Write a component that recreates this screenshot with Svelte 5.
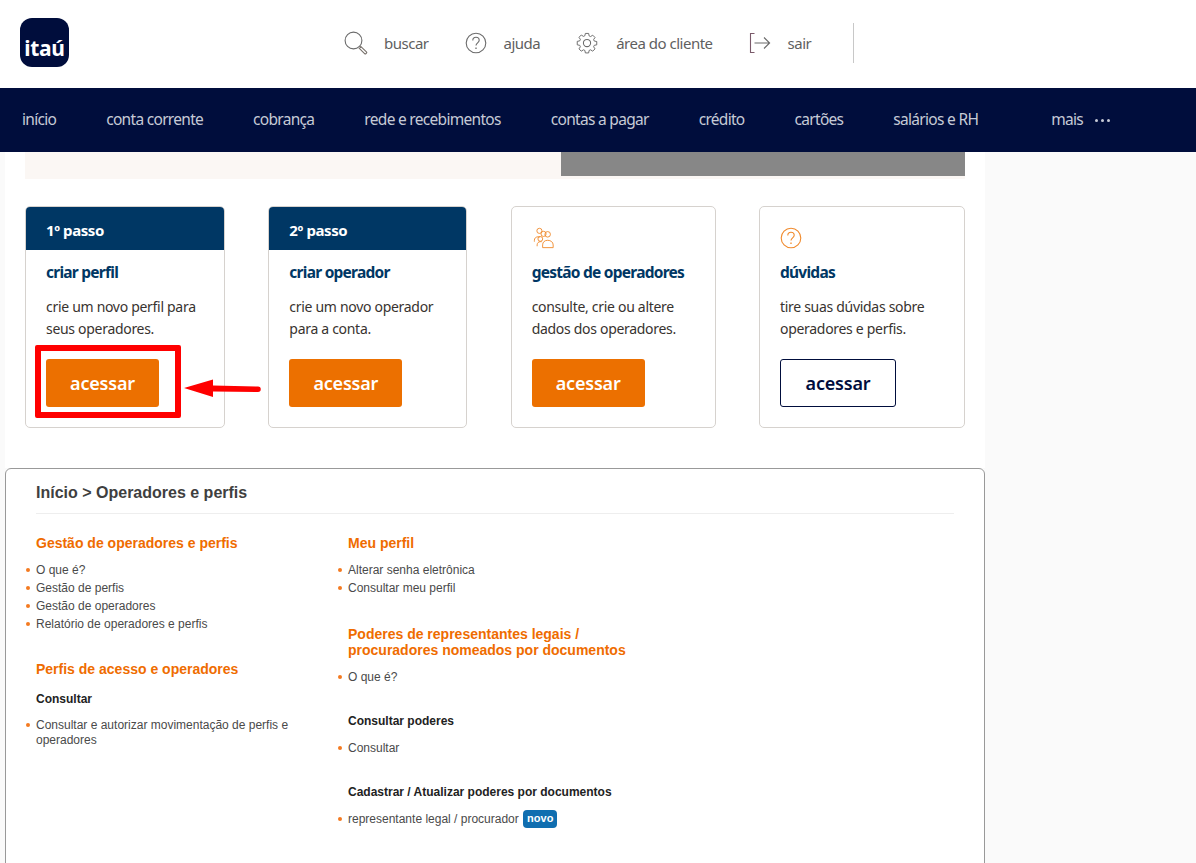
<script>
	const topLinks = [
		{ id: "search", label: "buscar" },
		{ id: "help", label: "ajuda" },
		{ id: "gear", label: "área do cliente" },
		{ id: "exit", label: "sair" },
	]

	const navItems = [
		"início",
		"conta corrente",
		"cobrança",
		"rede e recebimentos",
		"contas a pagar",
		"crédito",
		"cartões",
		"salários e RH",
	]

	const cards = [
		{ step: "1º passo", title: "criar perfil", text: ["crie um novo perfil para", "seus operadores."] },
		{ step: "2º passo", title: "criar operador", text: ["crie um novo operador", "para a conta."] },
		{ icon: "people", title: "gestão de operadores", text: ["consulte, crie ou altere", "dados dos operadores."] },
		{ icon: "help", title: "dúvidas", text: ["tire suas dúvidas sobre", "operadores e perfis."], outline: true },
	]
</script>

<div class="page">
	<header class="top">
		<div class="logo"><span>itaú</span></div>
		<div class="links">
			{#each topLinks as link}
				<a class="link {link.id}" href="#top">
					{#if link.id === "search"}
						<svg width="24" height="24" viewBox="0 0 24 24" fill="none" stroke="#6b6b6b" stroke-width="1.1">
							<circle cx="9.5" cy="9.5" r="8.4" />
							<path d="M15.6 15.6l1.4 1.2M16.4 15.2l6 5.6a1 1 0 0 1 0 1.4l-.4.4a1 1 0 0 1-1.4 0l-5.8-5.8" stroke="#77706a" />
						</svg>
					{:else if link.id === "help"}
						<svg width="22" height="22" viewBox="0 0 22 22" fill="none" stroke="#6b6b6b" stroke-width="1.1">
							<circle cx="11" cy="11" r="9.8" />
							<path d="M7.8 8.4c0-1.9 1.4-3.2 3.2-3.2s3.2 1.2 3.2 3c0 2.6-3.2 2.7-3.2 5.4" />
							<path d="M11 15.4v1.5" stroke-width="1.3" />
						</svg>
					{:else if link.id === "gear"}
						<svg width="22" height="22" viewBox="0 0 22 22" fill="none" stroke="#6b6b6b" stroke-width="1.05" stroke-linejoin="round">
							<circle cx="11" cy="11" r="3.6" />
							<path d="M9.2 1.2h3.6l.5 2.7 1.6.7 2.3-1.5 2.5 2.5-1.5 2.3.7 1.6 2.7.5v3.6l-2.7.5-.7 1.6 1.5 2.3-2.5 2.5-2.3-1.5-1.6.7-.5 2.7H9.2l-.5-2.7-1.6-.7-2.3 1.5-2.5-2.5 1.5-2.3-.7-1.6-2.7-.5V9.800l2.700-.5.7-1.600-1.500-2.300 2.500-2.500 2.300 1.500 1.600-.7z" transform="translate(11 11) scale(.92) translate(-11 -11.600)" />
						</svg>
					{:else}
						<svg width="22" height="22" viewBox="0 0 22 22" fill="none" stroke="#6b6b6b" stroke-width="1.1">
							<path d="M5.500 1.500H1.500v19h4" stroke="#7a5a6a" />
							<path d="M5.500 11h15M15 5.500l5.600 5.500-5.600 5.500" />
						</svg>
					{/if}
					<span>{link.label}</span>
				</a>
			{/each}
			<div class="sep"></div>
		</div>
	</header>

	<nav class="nav">
		{#each navItems as item}
			<a href="#top">{item}</a>
		{/each}
		<a class="more" href="#top">mais <i></i><i></i><i></i></a>
	</nav>

	<main class="content">
		<div class="hero"><div class="hero-img"></div></div>

		<div class="cards">
			{#each cards as card}
				<section class="card">
					{#if card.step}
						<div class="step">{card.step}</div>
					{:else if card.icon === "people"}
						<svg class="card-icon" width="24" height="24" viewBox="0 0 24 24" fill="none" stroke="#f08a2c" stroke-width="1">
							<circle cx="7" cy="4.200" r="2.800" />
							<circle cx="11.500" cy="7.500" r="2.800" />
							<circle cx="16" cy="8" r="3" />
							<path d="M1.500 16v-1.500c0-2.300 1.700-3.800 4-3.800h2.500" />
							<circle cx="8" cy="13" r="2.600" />
							<path d="M4.500 21v-1.500c0-2 1.500-3.500 3.500-3.500h1.500" />
							<path d="M10.500 22.500v-3c0-3 2.200-5 5.500-5s6 2 6 5v3z" />
						</svg>
					{:else}
						<svg class="card-icon" width="22" height="22" viewBox="0 0 22 22" fill="none" stroke="#f08a2c" stroke-width="1.100">
							<circle cx="11" cy="11" r="9.800" />
							<path d="M7.800 8.400c0-1.900 1.400-3.200 3.200-3.200s3.200 1.200 3.200 3c0 2.600-3.200 2.700-3.200 5.400" />
							<path d="M11 15.400v1.500" stroke-width="1.300" />
						</svg>
					{/if}
					<div class="body">
						<h3>{card.title}</h3>
						<p>{card.text[0]}<br />{card.text[1]}</p>
						<button class:outline={card.outline}>acessar</button>
					</div>
				</section>
			{/each}

			<!-- annotation drawn over the first card -->
			<div class="mark"></div>
			<svg class="arrow" width="80" height="24" viewBox="0 0 80 24">
				<path d="M1 12L30 3.500V9.500L75 10.500a2 2 0 0 1 0 5.500L30 15.500V21z" fill="#ff0000" />
			</svg>
		</div>
	</main>

	<section class="panel">
		<h2>Início &gt; Operadores e perfis</h2>
		<div class="cols">
			<div class="col">
				<h4>Gestão de operadores e perfis</h4>
				<ul>
					<li>O que é?</li>
					<li>Gestão de perfis</li>
					<li>Gestão de operadores</li>
					<li>Relatório de operadores e perfis</li>
				</ul>
				<h4 class="second">Perfis de acesso e operadores</h4>
				<h5>Consultar</h5>
				<ul>
					<li class="wrap">Consultar e autorizar movimentação de perfis e operadores</li>
				</ul>
			</div>
			<div class="col">
				<h4>Meu perfil</h4>
				<ul>
					<li>Alterar senha eletrônica</li>
					<li>Consultar meu perfil</li>
				</ul>
				<h4 class="second">Poderes de representantes legais /<br />procuradores nomeados por documentos</h4>
				<ul>
					<li>O que é?</li>
				</ul>
				<h5 class="gap">Consultar poderes</h5>
				<ul>
					<li>Consultar</li>
				</ul>
				<h5 class="gap">Cadastrar / Atualizar poderes por documentos</h5>
				<ul class="last">
					<li>representante legal / procurador <span class="badge">novo</span></li>
				</ul>
			</div>
		</div>
	</section>
</div>

<style>
	:global(body) {
		background: #fafafa;
		overflow: hidden;
	}

	.page {
		height: 863px;
		overflow: hidden;
		font-family: "Noto Sans", sans-serif;
	}

	.top {
		height: 88px;
		background: #fff;
		display: flex;
		align-items: center;
		padding-left: 20px;
	}

	.logo {
		width: 49px;
		height: 49px;
		margin-top: -3px;
		border-radius: 12px;
		background: #000d3c;
		display: flex;
		align-items: flex-end;
		justify-content: center;
		padding-bottom: 7px;
		box-sizing: border-box;
		color: #fff;
		font-weight: 700;
		font-size: 21px;
		line-height: 24px;
		letter-spacing: -0.3px;
	}

	.links {
		display: flex;
		align-items: center;
		margin-left: 275px;
		margin-top: -2px;
		color: #5f5f5f;
		font-size: 15px;
		letter-spacing: -0.5px;
	}

	.link {
		display: flex;
		align-items: center;
		gap: 16px;
		color: inherit;
		text-decoration: none;
		margin-right: 36px;
	}

	.link.help {
		gap: 17px;
	}

	.link.gear {
		gap: 18px;
	}

	.link.exit {
		gap: 17px;
		margin-right: 42px;
	}

	.sep {
		width: 1px;
		height: 40px;
		background: #c8c8c8;
	}

	.nav {
		height: 64px;
		box-sizing: border-box;
		padding-bottom: 2px;
		background: #000d3c;
		display: flex;
		align-items: center;
		gap: 50px;
		padding-left: 22px;
		font-size: 15.500px;
		letter-spacing: -0.7px;
	}

	.nav a {
		color: #c6cad6;
		text-decoration: none;
	}

	.more {
		display: flex;
		align-items: center;
		gap: 3px;
		margin-left: 23px;
	}

	.more i {
		width: 3px;
		height: 3px;
		border-radius: 50%;
		background: #c6cad6;
		margin-top: 2px;
	}

	.more i:first-of-type {
		margin-left: 9px;
	}

	.content {
		width: 980px;
		margin-left: 5px;
		height: 316px;
		background: #fff;
		padding: 0 20px;
		box-sizing: border-box;
	}

	.hero {
		height: 27px;
		background: #fbf7f4;
		display: flex;
		justify-content: flex-end;
		align-items: flex-start;
	}

	.hero-img {
		width: 404px;
		height: 24px;
		background: #878787;
	}

	.cards {
		position: relative;
		margin-top: 27px;
		display: grid;
		grid-template-columns: 200px 199px 205px 206px;
		column-gap: 43.330px;
		height: 222px;
	}

	.card {
		border: 1px solid #d6d2ce;
		border-radius: 5px;
		box-sizing: border-box;
		overflow: hidden;
		background: #fff;
		display: flex;
		flex-direction: column;
	}

	.step {
		height: 43px;
		background: #003764;
		color: #fff;
		font-weight: 700;
		font-size: 15px;
		letter-spacing: -0.4px;
		line-height: 47px;
		padding-left: 20px;
		flex: none;
	}

	.card-icon {
		margin: 20px 0 0 20px;
		height: 22px;
		flex: none;
		margin-bottom: 1px;
	}

	.body {
		padding: 13px 20px 0;
	}

	h3 {
		margin: 0;
		font-size: 15.500px;
		line-height: 18px;
		font-weight: 700;
		color: #003764;
		letter-spacing: -0.75px;
	}

	p {
		margin: 15px 0 0;
		font-size: 14px;
		line-height: 22px;
		color: #38332f;
		letter-spacing: -0.3px;
		white-space: nowrap;
	}

	button {
		display: block;
		margin-top: 19px;
		width: 113px;
		height: 48px;
		border: none;
		border-radius: 3px;
		background: #ec7000;
		color: #fff;
		font-family: inherit;
		font-weight: 600;
		font-size: 18px;
		letter-spacing: -0.2px;
		padding: 0;
	}

	button.outline {
		width: 116px;
		background: #fff;
		border: 1px solid #000d3c;
		color: #000d3c;
	}

	.mark {
		position: absolute;
		left: 10px;
		top: 139px;
		width: 146px;
		height: 73px;
		border: 6px solid #ff0000;
		border-radius: 2px;
		box-sizing: border-box;
	}

	.arrow {
		position: absolute;
		left: 158px;
		top: 170px;
	}

	.panel {
		width: 980px;
		margin: 0 0 0 5px;
		height: 500px;
		box-sizing: border-box;
		background: #fff;
		border: 1px solid #999;
		border-radius: 6px;
		padding: 0 30px;
		font-family: "Liberation Sans", Arial, sans-serif;
	}

	h2 {
		margin: 0;
		height: 44px;
		line-height: 47px;
		font-size: 16px;
		font-weight: 700;
		color: #3f3f3f;
		border-bottom: 1px solid #eee;
	}

	.cols {
		display: flex;
		padding-top: 21px;
	}

	.col {
		width: 312px;
	}

	h4 {
		margin: 0;
		font-size: 14px;
		line-height: 16px;
		font-weight: 700;
		color: #ef6c00;
	}

	h4.second {
		margin-top: 28px;
	}

	.col:last-child h4.second {
		margin-top: 29px;
	}

	h5 {
		margin: 14px 0 0;
		font-size: 12px;
		line-height: 16px;
		font-weight: 700;
		color: #222;
	}

	h5.gap {
		margin-top: 27px;
	}

	ul {
		list-style: none;
		margin: 10px 0 0;
		padding: 0;
	}

	ul.last {
		margin-top: 10px;
	}

	li {
		position: relative;
		font-size: 12px;
		line-height: 18px;
		color: #4a4a4a;
		width: 272px;
	}

	li.wrap {
		line-height: 15px;
		padding: 1px 0;
	}

	li::before {
		content: "";
		position: absolute;
		left: -10px;
		top: 7px;
		width: 4px;
		height: 4px;
		border-radius: 50%;
		background: #f47a20;
	}

	li.wrap::before {
		top: 6px;
	}

	.col:last-child li {
		width: 400px;
	}

	.badge {
		display: inline-block;
		margin-left: 1px;
		padding: 0 4px;
		height: 18px;
		line-height: 17px;
		border-radius: 4px;
		background: #106eb0;
		color: #fff;
		font-size: 11px;
		font-weight: 700;
		vertical-align: top;
	}
</style>
